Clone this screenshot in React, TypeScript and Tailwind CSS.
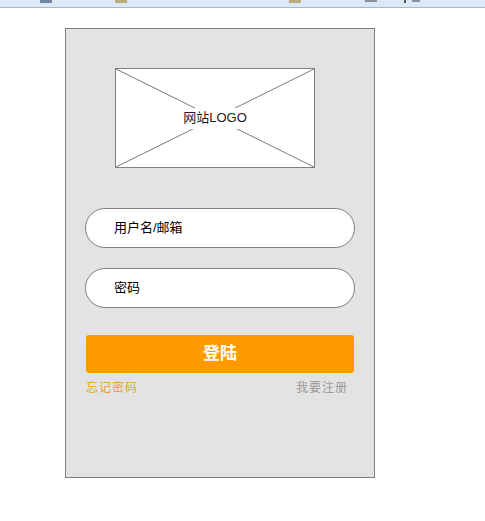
import React from "react";

export default function App() {
  const cjk = { fontFamily: '"Liberation Sans", "Noto Sans CJK SC", sans-serif' };
  return (
    <div className="min-h-[521px] w-[485px] bg-white" style={cjk}>
      {/* browser toolbar remnant */}
      <div className="flex h-[8px] items-start border-b border-[#a9b8cc] bg-[#dce8f6] pl-[40px]">
        <div className="h-[3px] w-[12px] bg-[#6f87a3]" />
        <div className="ml-[63px] h-[3px] w-[12px] bg-[#b9ad7e]" />
        <div className="ml-[162px] h-[3px] w-[12px] bg-[#b9ad7e]" />
        <div className="ml-[64px] h-[2px] w-[12px] bg-[#8a9099]" />
        <div className="ml-[27px] h-[3px] w-[2px] bg-[#555]" />
        <div className="ml-[6px] h-[2px] w-[8px] bg-[#8a9099]" />
      </div>

      <div className="ml-[65px] mt-[20px] flex h-[450px] w-[310px] flex-col border border-[#7f7f7f] bg-[#e3e3e3] pl-[19px]">
        {/* logo placeholder */}
        <div className="relative ml-[30px] mt-[39px] flex h-[100px] w-[200px] items-center justify-center border border-[#808080] bg-white">
          <svg className="absolute inset-0" width="198" height="98" viewBox="0 0 198 98">
            <line x1="0" y1="0" x2="198" y2="98" stroke="#7a7a7a" strokeWidth="1" />
            <line x1="198" y1="0" x2="0" y2="98" stroke="#7a7a7a" strokeWidth="1" />
          </svg>
          <div className="relative flex h-[21px] w-full items-center justify-center bg-white text-[13px] text-[#1a1a1a]">
            网站LOGO
          </div>
        </div>

        {/* inputs */}
        <div className="mt-[40px] flex flex-col gap-[20px]">
          <div className="flex h-[40px] w-[270px] items-center rounded-full border border-[#808080] bg-white pl-[28px] text-[13px] text-[#000]">
            用户名/邮箱
          </div>
          <div className="flex h-[40px] w-[270px] items-center rounded-full border border-[#808080] bg-white pl-[28px] text-[13px] text-[#000]">
            密码
          </div>
        </div>

        {/* login button */}
        <div className="ml-[1px] mt-[27px] flex h-[38px] w-[268px] items-center justify-center rounded-[3px] bg-[#ff9a00] text-[17px] font-bold text-white">
          登陆
        </div>

        {/* links */}
        <div className="ml-[1px] mt-[6px] flex w-[262px] justify-between text-[12px] leading-[18px] tracking-[1px]">
          <span className="text-[#f0a020]">忘记密码</span>
          <span className="text-[#999]">我要注册</span>
        </div>
      </div>
    </div>
  );
}
